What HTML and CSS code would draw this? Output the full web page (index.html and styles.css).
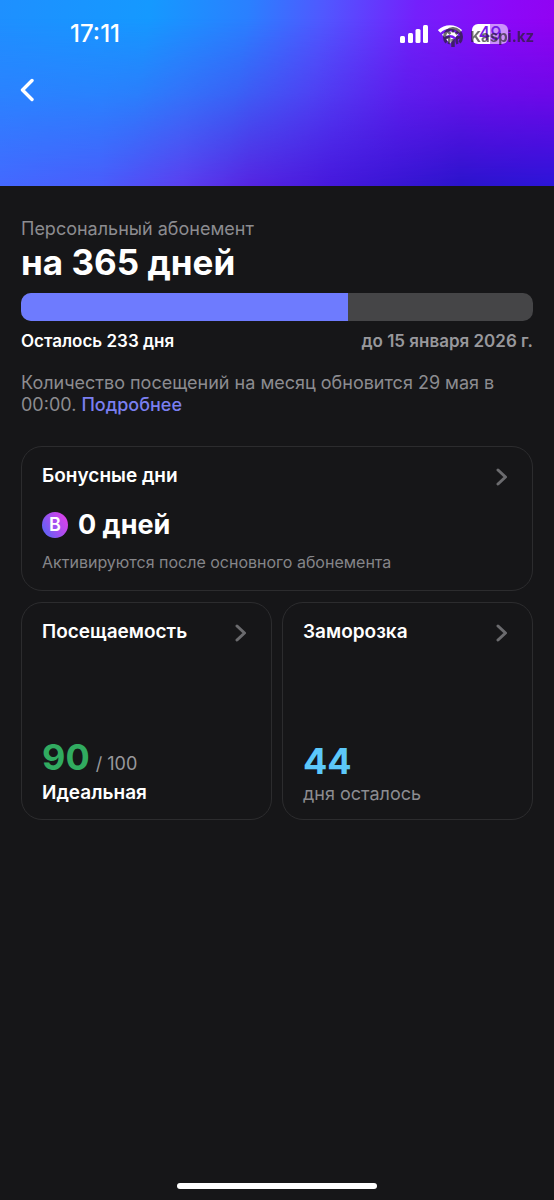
FILE: index.html
```html
<!DOCTYPE html>
<html lang="ru">
<head>
<meta charset="utf-8">
<meta name="viewport" content="width=device-width, initial-scale=1">
<title>Абонемент</title>
<link rel="stylesheet" href="styles.css">
</head>
<body>
<div class="screen">
  <header class="hero">
    <div class="status">
      <time class="clock">17:11</time>
      <div class="indicators">
        <svg class="signal" width="28" height="18" viewBox="0 0 28 18" fill="#fff" aria-hidden="true">
          <rect x="0" y="11" width="5" height="7" rx="1.5"/><rect x="8" y="8" width="5" height="10" rx="1.5"/><rect x="15.500" y="4" width="5" height="14" rx="1.500"/><rect x="23" y="0" width="5" height="18" rx="1.500"/>
        </svg>
        <svg class="wifi" width="24" height="19" viewBox="0 0 24 19" fill="none" stroke="#fff" stroke-width="3.600" aria-hidden="true">
          <path d="M1.200 6.400a15.500 15.500 0 0 1 21.600 0"/><path d="M5.200 11a9.800 9.800 0 0 1 13.600 0"/><path d="M12 18.500l-4-4.300a5.700 5.700 0 0 1 8 0z" fill="#fff" stroke="none"/>
        </svg>
        <span class="battery">49</span>
      </div>
      <div class="watermark">
        <svg width="20" height="21" viewBox="0 0 20 21" fill="none" stroke="#222" aria-hidden="true">
          <path d="M3.500 16.500A8.500 8.500 0 1 1 16.500 16.500" stroke-width="3"/>
          <path d="M10 1.500v5M3.500 4.500l4 3.500M16.500 4.500l-4 3.500M1.500 11l5 1M18.500 11l-5 1" stroke-width="2.500"/>
          <path d="M5.500 18c1.500-3 1.500-5-.5-8M14.500 18c-1.500-3-1.500-5 .5-8" stroke-width="2.500"/>
          <path d="M10 13v8" stroke-width="3.500"/>
        </svg>
        <span>Kaspi.kz</span>
      </div>
    </div>
    <button class="back" type="button" aria-label="Назад">
      <svg width="14" height="24" viewBox="0 0 14 24" fill="none" stroke="#fff" stroke-width="3.400" stroke-linecap="round" stroke-linejoin="round" aria-hidden="true"><path d="M12 2.500L2.500 12l9.500 9.500"/></svg>
    </button>
  </header>

  <main class="content">
    <section class="plan">
      <p class="muted">Персональный абонемент</p>
      <h1 class="title">на 365 дней</h1>
      <progress class="bar" value="233" max="365" aria-label="Осталось 233 дня"></progress>
      <div class="dates"><span>Осталось 233 дня</span><span class="until">до 15 января 2026 г.</span></div>
      <p class="muted note">Количество посещений на месяц обновится 29 мая в 00:00. <a class="more" href="#more">Подробнее</a></p>
    </section>

    <section class="cards">
      <a class="card wide" href="#bonus">
        <span class="card-head"><span class="card-title">Бонусные дни</span><svg class="chevron" width="12" height="18" viewBox="0 0 12 18" aria-hidden="true"><path d="M2 2l7.500 7L2 16"/></svg></span>
        <span class="bonus"><span class="coin">B</span>0 дней</span>
        <span class="hint">Активируются после основного абонемента</span>
      </a>
      <a class="card" href="#attendance">
        <span class="card-head"><span class="card-title">Посещаемость</span><svg class="chevron" width="12" height="18" viewBox="0 0 12 18" aria-hidden="true"><path d="M2 2l7.500 7L2 16"/></svg></span>
        <span class="stat"><span class="score"><b class="value green">90</b><span class="total">/ 100</span></span><span class="card-title">Идеальная</span></span>
      </a>
      <a class="card" href="#freeze">
        <span class="card-head"><span class="card-title">Заморозка</span><svg class="chevron" width="12" height="18" viewBox="0 0 12 18" aria-hidden="true"><path d="M2 2l7.500 7L2 16"/></svg></span>
        <span class="stat"><b class="value blue">44</b><span class="muted">дня осталось</span></span>
      </a>
    </section>
  </main>
  <div class="home"></div>
</div>
</body>
</html>
```

FILE: styles.css
```css
* { box-sizing: border-box; }
body { margin: 0; background: #161618; color: #fff; font-family: Inter, "Liberation Sans", sans-serif; }
h1, p { margin: 0; font-size: inherit; }
a { color: inherit; text-decoration: none; }

.screen { min-height: 100vh; display: flex; flex-direction: column; }

.hero {
  position: relative;
  isolation: isolate;
  padding: 16px 20px 84px;
  background: linear-gradient(98deg, #1e90ff 0%, #1599ff 26%, #2a80ff 43%, #5058ff 56%, #7420fc 72%, #8c08f8 88%, #9400f0 100%);
}
.hero::before {
  content: "";
  position: absolute;
  inset: 0;
  z-index: -1;
  background: linear-gradient(90deg, #4468ff 0%, #4a5cfc 18%, #5a3ff0 33%, #5525e2 45%, #4518dc 60%, #2b14cc 83%, #2c14d8 100%);
  -webkit-mask-image: linear-gradient(transparent 10%, rgba(0, 0, 0, .35) 50%, #000);
  mask-image: linear-gradient(transparent 10%, rgba(0, 0, 0, .35) 50%, #000);
}
.status { position: relative; display: flex; justify-content: space-between; align-items: center; height: 36px; padding: 0 26px 0 50px; }
.clock { font-size: 24px; line-height: 28px; font-weight: 500; }
.indicators { display: flex; align-items: center; gap: 10px; }
.battery { width: 36px; height: 20px; border-radius: 6px; background: linear-gradient(90deg, #fff 49%, #cb91fa 49%); color: #7418e8; font-size: 18px; line-height: 20px; font-weight: 500; text-align: center; }
.watermark { position: absolute; right: 0; top: 10px; display: flex; align-items: center; gap: 7px; color: #222; font-size: 15px; line-height: 20px; font-weight: 700; opacity: .65; }
.back { display: flex; margin-top: 26px; padding: 0; border: 0; background: none; }

.content { padding: 32px 21px 40px; flex: 1; }
.muted { color: #8c8c90; font-size: 18px; line-height: 22px; }
.title { font-size: 35px; line-height: 44px; font-weight: 700; }
.bar { display: block; width: 100%; height: 28px; margin-top: 9px; border: 0; border-radius: 10px; overflow: hidden; appearance: none; background: #454547; }
.bar::-webkit-progress-bar { background: #454547; }
.bar::-webkit-progress-value { background: #6e7bfe; }
.dates { display: flex; justify-content: space-between; margin-top: 9px; font-size: 17px; line-height: 22px; font-weight: 600; }
.until { color: #98989c; }
.note { margin-top: 20px; }
.more { color: #7a7ff0; font-weight: 500; }

.cards { display: grid; grid-template-columns: 1fr 1fr; gap: 11px 10px; margin-top: 30px; }
.card { display: flex; flex-direction: column; min-height: 218px; padding: 17px 20px 14px; border: 1px solid #2c2c2e; border-radius: 21px; }
.wide { grid-column: 1 / -1; min-height: 0; padding-bottom: 18px; }
.card-head { display: flex; justify-content: space-between; align-items: center; padding-right: 4px; }
.card-title { font-size: 19px; line-height: 24px; font-weight: 600; }
.chevron { margin-top: 2px; fill: none; stroke: #6b6b6e; stroke-width: 3; stroke-linecap: round; stroke-linejoin: round; }
.bonus { display: flex; align-items: center; gap: 10px; margin-top: 20px; font-size: 27px; line-height: 34px; font-weight: 700; }
.coin { width: 26px; height: 26px; border-radius: 50%; background: linear-gradient(60deg, #5d63f5 10%, #a44ff0 50%, #e43fe8 95%); font-size: 18px; line-height: 26px; font-weight: 600; text-align: center; }
.hint { margin-top: 10px; color: #858589; font-size: 16px; line-height: 20px; }
.stat { display: flex; flex-direction: column; margin-top: auto; }
.score { display: flex; align-items: baseline; gap: 6px; padding-bottom: 2px; }
.value { font-size: 36px; line-height: 44px; font-weight: 700; }
.green { color: #31ab60; }
.blue { color: #5cc8fa; }
.total { color: #98989c; font-size: 18px; }

.home { width: 36%; height: 6px; margin: 0 auto 11px; border-radius: 3px; background: #fff; }
```
